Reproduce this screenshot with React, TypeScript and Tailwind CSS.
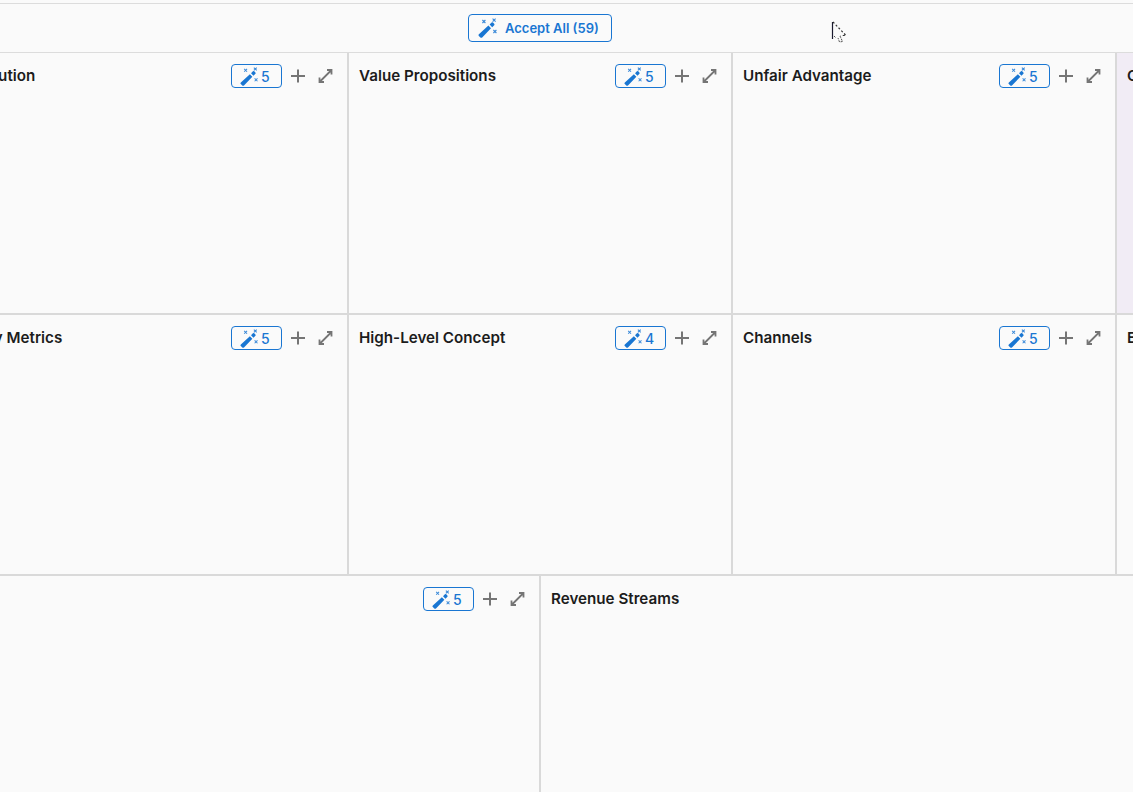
function WandIcon({ className }: { className?: string }) {
  return (
    <svg className={className} viewBox="0 0 20 20" fill="none">
      <path d="M.9 16.2 10.4 7.6l2.6 2.6-8.8 9.2a1.3 1.3 0 0 1-1.8 0L.9 18a1.3 1.3 0 0 1 0-1.8z" fill="currentColor" />
      <path d="M11.6 6.5l2-1.9a1 1 0 0 1 1.4 0l1.2 1.2a1 1 0 0 1 0 1.4l-2 2z" fill="currentColor" />
      <path d="M4.4 2l3 3M7.4 2l-3 3M14.6.6l3 3M17.6.6l-3 3M15.4 12l3 3M18.4 12l-3 3" stroke="currentColor" strokeWidth="1.1" opacity="0.85" />
    </svg>
  );
}

function PlusIcon() {
  return (
    <svg className="w-4 h-4 text-[#757575]" viewBox="0 0 16 16" fill="none">
      <path d="M8 1.5v13M1 8h14" stroke="currentColor" strokeWidth="2" />
    </svg>
  );
}

function ExpandIcon() {
  return (
    <svg className="w-4 h-4 text-[#757575]" viewBox="0 0 16 16" fill="none">
      <path d="M10 2h4.5v4.5M14.5 2 2.5 14M2.5 9.5V14H7" stroke="currentColor" strokeWidth="1.8" />
    </svg>
  );
}

function Cell({ title, count, tinted }: { title: string; count?: number; tinted?: boolean }) {
  return (
    <div className={`flex items-start justify-between pl-[10px] pr-[14px] pt-[11px] min-w-0 ${tinted ? 'bg-[#f1ecf5]' : 'bg-[#fafafa]'}`}>
      <h3 className="text-[15.2px] leading-6 font-semibold text-[#1c1c1c] whitespace-nowrap">{title}</h3>
      {count !== undefined && (
        <div className="flex items-center">
          <span className="flex items-center gap-[2px] pl-2 w-[51px] h-6 rounded border border-[#1976d2] text-[#1976d2] text-[14px] font-medium">
            <WandIcon className="w-[19px] h-[19px]" />
            {count}
          </span>
          <span className="ml-2 flex"><PlusIcon /></span>
          <span className="ml-[11px] flex"><ExpandIcon /></span>
        </div>
      )}
    </div>
  );
}

const rowOne = [
  { title: 'Problem', count: 5 },
  { title: 'Solution', count: 5 },
  { title: 'Value Propositions', count: 5 },
  { title: 'Unfair Advantage', count: 5 },
  { title: 'Customer Segments', count: 5, tinted: true },
];

const rowTwo = [
  { title: 'Existing Alternatives', count: 5 },
  { title: 'Key Metrics', count: 5 },
  { title: 'High-Level Concept', count: 4 },
  { title: 'Channels', count: 5 },
  { title: 'Early Adopters', count: 5 },
];

export default function App() {
  return (
    <div className="relative h-screen overflow-hidden bg-[#fafafa] font-['Inter',sans-serif]">
      <div className="ml-[-419px] w-[1918px]">
        <div className="mt-[3px] h-[50px] border-y border-[#dcdcdc] flex items-center justify-center">
          <button className="flex items-center gap-[7px] pl-[9px] w-[144px] h-[28px] rounded border border-[#1976d2] text-[#1976d2] text-[13px] font-semibold">
            <WandIcon className="w-5 h-5" />
            <span className="pt-[2px]">Accept All (59)</span>
          </button>
        </div>

        <div className="bg-[#d9d9d9] flex flex-col gap-[2px]">
          <div className="grid grid-cols-[repeat(5,382px)] gap-[2px] h-[260px]">
            {rowOne.map((cell) => (
              <Cell key={cell.title} {...cell} />
            ))}
          </div>
          <div className="grid grid-cols-[repeat(5,382px)] gap-[2px] h-[259px]">
            {rowTwo.map((cell) => (
              <Cell key={cell.title} {...cell} />
            ))}
          </div>
          <div className="grid grid-cols-[958px_958px] gap-[2px] h-[220px]">
            <Cell title="Cost Structure" count={5} />
            <Cell title="Revenue Streams" />
          </div>
        </div>
      </div>

      {/* screen recorder's cursor */}
      <svg className="absolute left-[831px] top-[21px] w-[17px] h-[22px]" viewBox="0 0 17 22" fill="none">
        <path d="M1.5 1v17" stroke="#1a1a2e" strokeWidth="1.2" />
        <path d="M2 1l13 13.5H9.5" stroke="#333" strokeWidth="1.2" strokeDasharray="2 2" />
        <path d="M3 15l1.5 1.5M9 15l2.5 5.5-3 .5-1.5-4" stroke="#555" strokeWidth="1" strokeDasharray="2 1" />
      </svg>
    </div>
  );
}
